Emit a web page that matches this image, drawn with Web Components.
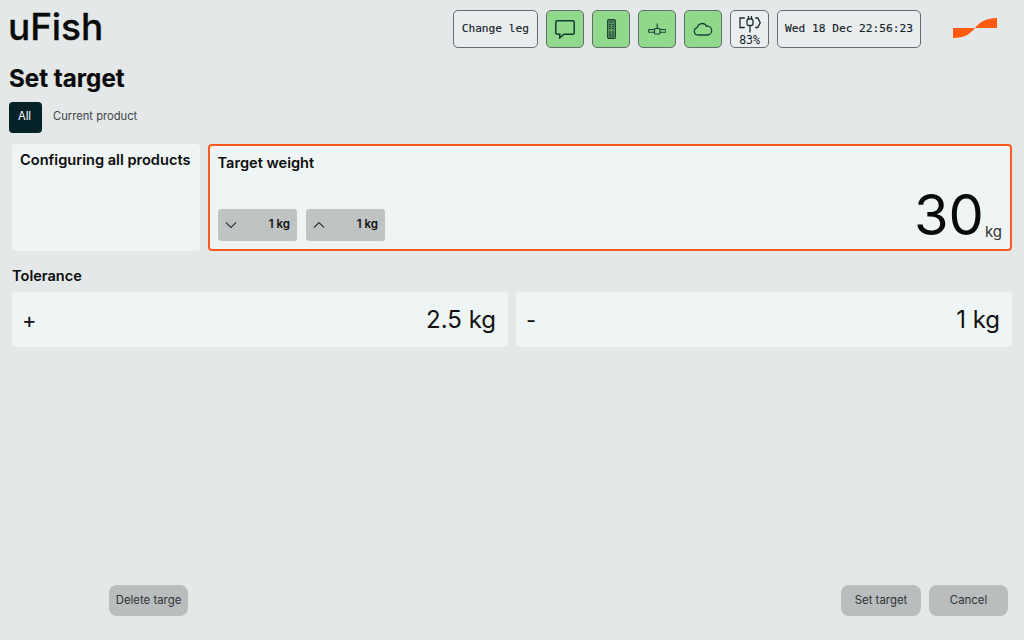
<!DOCTYPE html>
<html lang="en"><head><meta charset="utf-8"><title>uFish</title>
<style>
html,body{margin:0;padding:0;height:100%;background:#e4e8e9;font-family:Inter,"Liberation Sans",sans-serif;color:#0c0c0c}
body{width:1024px;height:640px;overflow:hidden}
</style></head><body>
<uf-app></uf-app>
<script>
function def(name, css, html){
  customElements.define(name, class extends HTMLElement{
    constructor(){super();const r=this.attachShadow({mode:'open'});r.innerHTML='<style>'+css+'</style>'+html;}
  });
}
def('uf-status', `
:host{display:flex;box-sizing:border-box;height:38px;align-items:center;justify-content:center;border:1px solid #666c6e;border-radius:5px;font:11.2px/1 "DejaVu Sans Mono",monospace;color:#14232a;background:#e9edee;-webkit-text-stroke:.15px #14232a}
:host([green]){background:#90d98a;width:38px;color:#15302a}
:host([wide]){padding:0 8px;white-space:nowrap}
:host([date]){padding:0 7px}
:host([batt]){width:39px;flex-direction:column;gap:2px;background:#eaeeef;font-size:11.500px;padding-top:3px;-webkit-text-stroke:0}
`,`<slot></slot>`);
def('uf-header', `
:host{display:flex;align-items:flex-start;height:66px;box-sizing:border-box;padding:10px 0 0 8px}
.t{font:500 37px/34px Inter,sans-serif;color:#0a0a0a;flex:1;letter-spacing:-.1px;-webkit-text-stroke:.3px #0a0a0a}
.b{display:flex;gap:8px}
.l{width:44px;height:20px;margin:8px 27px 0 32px;display:block}
svg{display:block}
`,`<div class="t">uFish</div><div class="b"><slot></slot></div>
<svg class="l" viewBox="0 0 44 20"><path fill="#ff5a0f" d="M0 10H22C27 4 32 .500 44 0V10H22C17 16 12 20 0 20Z"/></svg>`);
def('uf-tabs', `
:host{display:flex;align-items:stretch;height:31px;margin:0 0 0 9px;font:400 11.200px/29px Inter,sans-serif;color:#3d4548}
.a{background:#052229;color:#fff;border-radius:4px;width:33px;box-sizing:border-box;padding-right:2px;text-align:center;font-weight:400}
.o{margin-left:11px}
`,`<div class="a">All</div><div class="o">Current product</div>`);
def('uf-card', `
:host{display:block;box-sizing:border-box;background:#eff5f5;border-radius:4px}
:host([active]){border:2px solid #ff5a1f;border-radius:4px}
`,`<slot></slot>`);
def('uf-step', `
:host{display:flex;align-items:center;justify-content:space-between;box-sizing:border-box;width:79px;height:32px;padding:0 7px 0 7px;background:#bfc3c3;border-radius:3px;font:600 11.500px/1 Inter,sans-serif;color:#111}
svg{display:block}
`,`<svg width="12" height="8" viewBox="0 0 12 8" fill="none" stroke="#2e3436" stroke-width="1.100"><path d="M1 1.500L6 6.500L11 1.500"/></svg><slot></slot>`);
def('uf-btn', `
:host{display:flex;align-items:center;justify-content:center;box-sizing:border-box;width:80px;height:31px;background:#babdbd;border-radius:8px;font:400 11.400px/1 Inter,sans-serif;color:#2e3335;white-space:nowrap;overflow:hidden}
`,`<slot></slot>`);
def('uf-tol', `
:host{display:flex;align-items:center;justify-content:space-between;box-sizing:border-box;height:55px;padding:0 12px 0 10px;background:#eff5f5;border-radius:4px;font:400 24px/1 Inter,sans-serif;color:#111;flex:1}
.s{font-size:22px}
`,`<span class="s"><slot name="s"></slot></span><slot></slot>`);
def('uf-app', `
:host{display:flex;flex-direction:column;height:640px;box-sizing:border-box;font-family:Inter,sans-serif}
h1{font:700 24.200px/28px Inter,sans-serif;margin:-1px 0 9px 9px;color:#0a0a0a;-webkit-text-stroke:.2px #0a0a0a}
.row{display:flex;gap:8px;margin:11px 12px 0 12px;height:107px}
.side{width:188px;padding:7px 8px;font:600 14.600px/18px Inter,sans-serif;white-space:nowrap;color:#0c0c0c}
.main{flex:1;padding:8px 8px 8px 8px;display:flex;justify-content:space-between;align-items:flex-end;position:relative}
.tw{position:absolute;left:7.500px;top:8px;font:600 14.600px/18px Inter,sans-serif}
.st{display:flex;gap:9px}
.val{display:flex;align-items:baseline;font:400 56px/56px Inter,sans-serif;color:#0a0a0a;margin:0 0 -2px 0}
.val small{font:400 15px/1 Inter,sans-serif;color:#333;margin-left:1px;position:relative;top:2px}
h2{font:600 14.600px/18px Inter,sans-serif;margin:16px 0 7px 12px;color:#0c0c0c}
.tr{display:flex;gap:8px;margin:0 12px}
.foot{margin-top:auto;margin-bottom:24px;display:flex;padding-left:109px;padding-right:16px}
.sp{flex:1}
.del{width:79px}.can{width:79px;margin-left:8px}
`,`
<uf-header>
<uf-status wide>Change leg</uf-status>
<uf-status green><svg width="20" height="19" viewBox="0 0 20 19" fill="none" stroke="#123a35" stroke-width="1.500"><path d="M2.200 .8h15.600a1.400 1.400 0 0 1 1.400 1.400v10.600a1.400 1.400 0 0 1-1.400 1.400H8.800L4.800 17.800V14.200H2.200A1.400 1.400 0 0 1 .8 12.800V2.200A1.400 1.400 0 0 1 2.200 .8Z"/></svg></uf-status>
<uf-status green><svg width="9" height="20" viewBox="0 0 9 20" fill="none" stroke="#1a4034" stroke-width="1.100"><rect x=".6" y=".6" width="7.800" height="18.800" rx="1.200" fill="#5e9a62"/><path d="M2 3h5M2 5.500h2M5 5.500h2M2 7.500h2M5 7.500h2M2 9.500h2M5 9.500h2M2 13h2M5 13h2M2 15h2M5 15h2M2 17h5"/></svg></uf-status>
<uf-status green><svg width="18" height="12" viewBox="0 0 18 12" fill="none" stroke="#17403a" stroke-width="1.100"><rect x="6.500" y="5.500" width="5.500" height="5.500" rx="1"/><path d="M9.200 5.500V.5M6.500 6.500H1a.6.6 0 0 0-.4.400v2a.6.6 0 0 0 .4.400h5.500M12 6.500h5.500a.6.6 0 0 1 .4.400v2a.6.6 0 0 1-.4.400H12"/></svg></uf-status>
<uf-status green><svg width="20" height="14" viewBox="0 0 20 14" fill="none" stroke="#17403a" stroke-width="1.300"><path d="M5 13a3.700 3.700 0 0 1-.8-7.300A5 5 0 0 1 13.600 4.300 4.400 4.400 0 0 1 15 13Z"/></svg></uf-status>
<uf-status batt><svg width="22" height="18" viewBox="0 0 22 18" fill="none" stroke="#1b2a30" stroke-width="1.300"><path d="M5.800 3H1v9.500H5.800M16.200 3h2.600l2.400 4.700L18.800 12.500h-2.600"/><rect x="8" y="4" width="6" height="6.500" rx="1.800"/><path d="M9.500 1v3M12.500 1v3M11 10.500V17.500"/></svg><span>83%</span></uf-status>
<uf-status wide date>Wed 18 Dec 22:56:23</uf-status>
</uf-header>
<h1>Set target</h1>
<uf-tabs></uf-tabs>
<div class="row">
<uf-card class="side">Configuring all products</uf-card>
<uf-card class="main" active><div class="tw">Target weight</div>
<div class="st"><uf-step>1 kg</uf-step><uf-step id="up">1 kg</uf-step></div>
<div class="val">30<small>kg</small></div></uf-card>
</div>
<h2>Tolerance</h2>
<div class="tr"><uf-tol><span slot="s">+</span>2.5 kg</uf-tol><uf-tol><span slot="s">-</span>1 kg</uf-tol></div>
<div class="foot"><uf-btn class="del">Delete targe</uf-btn><div class="sp"></div><uf-btn>Set target</uf-btn><uf-btn class="can">Cancel</uf-btn></div>
`);
document.querySelector('uf-app').shadowRoot.getElementById('up').shadowRoot.querySelector('svg').style.transform='scaleY(-1)';
</script>
</body></html>
